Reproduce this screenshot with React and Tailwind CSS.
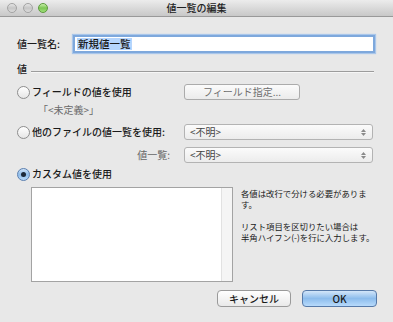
const Radio = ({ checked }) => (
    <span
        className={
            checked
                ? "w-[13px] h-[13px] rounded-full border border-[#5a7fb0] bg-gradient-to-b from-[#cfe3f8] via-[#8fbdea] to-[#b9dafa] flex items-center justify-center shrink-0"
                : "w-[13px] h-[13px] rounded-full border border-[#8e8e8e] bg-gradient-to-b from-[#ffffff] to-[#e6e6e6] shrink-0"
        }
    >
        {checked && <span className="w-[5px] h-[5px] rounded-full bg-[#1d2a3a]" />}
    </span>
);

const Light = ({ green }) => (
    <span
        className={
            green
                ? "w-[10px] h-[10px] rounded-full border border-[#5c9a3c] bg-gradient-to-b from-[#c8f0a8] via-[#7cc652] to-[#9fe07a]"
                : "w-[10px] h-[10px] rounded-full border border-[#a3a3a3] bg-gradient-to-b from-[#e6e6e6] via-[#c6c6c6] to-[#dcdcdc]"
        }
    />
);

const Popup = ({ label }) => (
    <div className="w-[189px] h-[16px] rounded-[3px] border border-[#b3b3b3] bg-gradient-to-b from-[#fbfbfb] to-[#ececec] flex items-center justify-between pl-[5px] pr-[6px]">
        <span className="text-[10px] leading-none text-[#444]">{label}</span>
        <span className="flex flex-col items-center gap-[1px] text-[#8a8a8a]">
            <svg width="5" height="3" viewBox="0 0 5 3"><path d="M0 3 L2.5 0 L5 3 Z" fill="currentColor" /></svg>
            <svg width="5" height="3" viewBox="0 0 5 3"><path d="M0 0 L2.5 3 L5 0 Z" fill="currentColor" /></svg>
        </span>
    </div>
);

export default function App() {
    return (
        <div className="w-[393px] h-[322px] bg-[#e8e8e8] overflow-hidden font-['Noto_Sans_CJK_JP',sans-serif] text-[#1a1a1a]">
            {/* Title bar */}
            <div className="h-[17px] bg-gradient-to-b from-[#ececec] to-[#c8c8c8] border-b border-[#999] flex items-center relative">
                <div className="flex items-center gap-[5.5px] pl-[7px]">
                    <Light />
                    <Light />
                    <Light green />
                </div>
                <span className="absolute left-0 right-0 text-center text-[10px] leading-none font-medium text-[#222]">値一覧の編集</span>
            </div>

            <div className="pl-[17px] pr-[18px]">
                {/* Name */}
                <div className="mt-[18px] h-[18px] flex items-center">
                    <span className="w-[56px] text-[10px] leading-none font-medium">値一覧名:</span>
                    <div className="flex-1 h-[18px] border-[2px] border-[#7ea8dc] bg-white flex items-center pl-[2px] shadow-[0_0_1px_1px_#a9c6ea]">
                        <span className="bg-[#b5d5fd] text-[10.5px] leading-[12px] font-medium px-[1px]">新規値一覧</span>
                    </div>
                </div>

                {/* Section */}
                <div className="mt-[10px] h-[12px] flex items-center">
                    <span className="text-[10px] leading-none font-medium">値</span>
                    <div className="flex-1 ml-[4px] mr-[1px] mt-[6px] h-[1px] bg-[#9c9c9c] border-b border-[#f6f6f6] box-content" />
                </div>

                {/* Field value */}
                <div className="mt-[9px] h-[16px] grid grid-cols-[167px_1fr] items-center">
                    <label className="flex items-center gap-[2px]">
                        <Radio />
                        <span className="text-[10px] leading-none font-medium">フィールドの値を使用</span>
                    </label>
                    <div className="w-[116px] h-[16px] rounded-[3px] border border-[#ababab] bg-gradient-to-b from-[#fbfbfb] to-[#ebebeb] flex items-center justify-center text-[10px] leading-none text-[#6d6d6d]">
                        フィールド指定...
                    </div>
                </div>
                <div className="mt-[4px] h-[12px] pl-[21px] flex items-center text-[10px] leading-none text-[#6a6a6a]">「&lt;未定義&gt;」</div>

                {/* Other file */}
                <div className="mt-[8px] h-[16px] grid grid-cols-[167px_1fr] items-center">
                    <label className="flex items-center gap-[2px]">
                        <Radio />
                        <span className="text-[10px] leading-none font-medium">他のファイルの値一覧を使用:</span>
                    </label>
                    <Popup label="<不明>" />
                </div>
                <div className="mt-[7px] h-[16px] grid grid-cols-[167px_1fr] items-center">
                    <span className="text-right pr-[14px] text-[10px] leading-none text-[#666]">値一覧:</span>
                    <Popup label="<不明>" />
                </div>

                {/* Custom */}
                <div className="mt-[4px] h-[14px] flex items-center gap-[2px]">
                    <Radio checked />
                    <span className="text-[10px] leading-none font-medium">カスタム値を使用</span>
                </div>
                <div className="mt-[6px] flex">
                    <div className="ml-[14px] w-[202px] h-[95px] shrink-0 border border-[#a3a3a3] bg-white flex justify-end">
                        <div className="w-[11px] h-full bg-[#f5f5f5] border-l border-[#e2e2e2]" />
                    </div>
                    <div className="ml-[8px] whitespace-nowrap text-[8.4px] leading-[11px] text-[#1a1a1a] mt-[1px]">
                        <p>各値は改行で分ける必要がありま</p>
                        <p>す。</p>
                        <p className="mt-[11px]">リスト項目を区切りたい場合は</p>
                        <p>半角ハイフン(-)を行に入力します。</p>
                    </div>
                </div>

                {/* Buttons */}
                <div className="mt-[8px] flex justify-end gap-[11px] -mr-[2px]">
                    <button className="w-[74px] h-[17px] rounded-[4px] border border-[#9a9a9a] bg-gradient-to-b from-[#ffffff] to-[#e9e9e9] text-[10px] leading-none font-medium">
                        キャンセル
                    </button>
                    <button className="w-[75px] h-[17px] rounded-[4px] border border-[#5679a8] bg-gradient-to-b from-[#d3e6f9] via-[#8cbcec] to-[#b7dafb] text-[10px] leading-none font-medium">
                        OK
                    </button>
                </div>
            </div>
        </div>
    );
}
